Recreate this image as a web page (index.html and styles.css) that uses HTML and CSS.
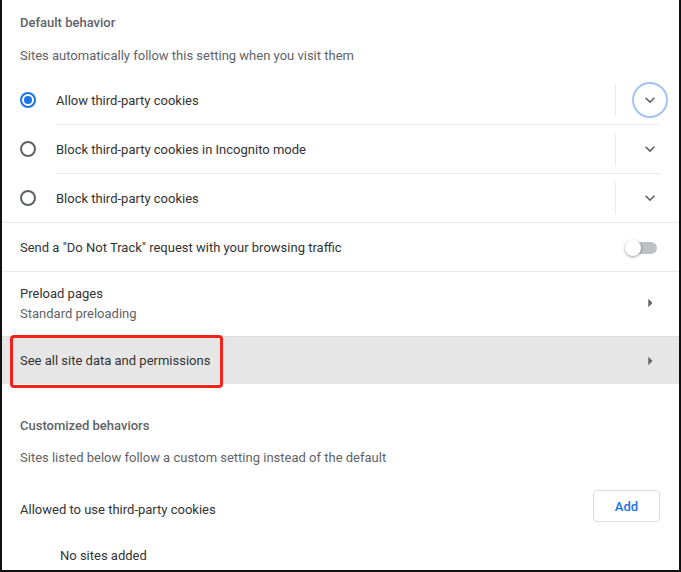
FILE: index.html
```html
<!DOCTYPE html>
<html lang="en">
<head>
<meta charset="utf-8">
<title>Cookies settings</title>
<link rel="stylesheet" href="styles.css">
</head>
<body>
<div class="frame">
  <div class="section-title">Default behavior</div>
  <div class="section-sub">Sites automatically follow this setting when you visit them</div>

  <div class="radio-group">
    <div class="radio-row">
      <span class="radio checked"></span>
      <div class="radio-body">
        <span class="label">Allow third-party cookies</span>
        <span class="vdivider"></span>
        <span class="icon-btn focused">
          <svg viewBox="0 0 24 24" width="20" height="20"><path d="M7.41 8.59L12 13.17l4.59-4.58L18 10l-6 6-6-6 1.41-1.41z" fill="#5f6368"/></svg>
        </span>
      </div>
    </div>
    <div class="radio-row">
      <span class="radio"></span>
      <div class="radio-body">
        <span class="label">Block third-party cookies in Incognito mode</span>
        <span class="vdivider"></span>
        <span class="icon-btn">
          <svg viewBox="0 0 24 24" width="20" height="20"><path d="M7.41 8.59L12 13.17l4.59-4.58L18 10l-6 6-6-6 1.41-1.41z" fill="#5f6368"/></svg>
        </span>
      </div>
    </div>
    <div class="radio-row">
      <span class="radio"></span>
      <div class="radio-body">
        <span class="label">Block third-party cookies</span>
        <span class="vdivider"></span>
        <span class="icon-btn">
          <svg viewBox="0 0 24 24" width="20" height="20"><path d="M7.41 8.59L12 13.17l4.59-4.58L18 10l-6 6-6-6 1.41-1.41z" fill="#5f6368"/></svg>
        </span>
      </div>
    </div>
  </div>

  <div class="row toggle-row">
    <span class="label">Send a "Do Not Track" request with your browsing traffic</span>
    <span class="toggle"><span class="toggle-bar"></span><span class="toggle-knob"></span></span>
  </div>

  <div class="row two-line">
    <div class="text-col">
      <div class="title">Preload pages</div>
      <div class="secondary">Standard preloading</div>
    </div>
    <span class="icon-btn">
      <svg viewBox="0 0 24 24" width="20" height="20"><path d="M10 17l5-5-5-5v10z" fill="#5f6368"/></svg>
    </span>
  </div>

  <div class="row link-row">
    <span class="label">See all site data and permissions</span>
    <span class="icon-btn">
      <svg viewBox="0 0 24 24" width="20" height="20"><path d="M10 17l5-5-5-5v10z" fill="#5f6368"/></svg>
    </span>
    <span class="annot"></span>
  </div>

  <div class="section-title custom">Customized behaviors</div>
  <div class="section-sub custom-sub">Sites listed below follow a custom setting instead of the default</div>

  <div class="list-header">
    <span class="label">Allowed to use third-party cookies</span>
    <span class="add-btn">Add</span>
  </div>
  <div class="empty">No sites added</div>
</div>
</body>
</html>
```

FILE: styles.css
```css
* { box-sizing: border-box; }
html, body {
  margin: 0;
  padding: 0;
  background: #fff;
}
body {
  font-family: Roboto, "Liberation Sans", Arial, sans-serif;
  font-size: 13px;
  color: #333;
}
.frame {
  width: 681px;
  height: 572px;
  overflow: hidden;
  border-left: 2px solid #111;
  border-right: 2px solid #111;
  border-bottom: 2px solid #111;
  background: #fff;
}
.label, .title {
  color: #333;
  line-height: 20px;
}
.secondary {
  color: #5f6368;
  line-height: 20px;
}
.section-title {
  padding: 13px 19px 0 18px;
  line-height: 20px;
  font-weight: 500;
  color: #5f6368;
}
.section-sub {
  margin-top: 13px;
  padding: 0 19px 0 18px;
  line-height: 20px;
  color: #5f6368;
}
.radio-group {
  margin-top: 10px;
}
.radio-row {
  display: flex;
  align-items: stretch;
  padding-left: 18px;
}
.radio {
  align-self: center;
  width: 16px;
  height: 16px;
  border-radius: 50%;
  border: 2px solid #5f6368;
  margin-right: 20px;
  flex: none;
  position: relative;
}
.radio.checked {
  border-color: #1a73e8;
}
.radio.checked::after {
  content: "";
  position: absolute;
  left: 2px;
  top: 2px;
  width: 8px;
  height: 8px;
  border-radius: 50%;
  background: #1a73e8;
}
.radio-body {
  flex: 1;
  display: flex;
  align-items: center;
  height: 48px;
  margin-right: 19px;
}
.radio-row + .radio-row .radio-body {
  height: 49px;
  border-top: 1px solid #e8eaed;
}
.radio-body .label {
  flex: 1;
  padding-top: 1px;
}
.vdivider {
  width: 1px;
  height: 32px;
  background: #e8eaed;
  margin-right: 16px;
  flex: none;
}
.icon-btn {
  width: 36px;
  height: 36px;
  border-radius: 50%;
  display: flex;
  align-items: center;
  justify-content: center;
  margin-right: -8px;
  flex: none;
  border: 2px solid transparent;
}
.icon-btn.focused {
  border-color: #a3c3f5;
}
.icon-btn svg {
  display: block;
}
.row {
  display: flex;
  align-items: center;
  padding: 0 19px 0 18px;
  border-top: 1px solid #e8eaed;
}
.row .label {
  flex: 1;
  padding-top: 1px;
}
.row .text-col {
  flex: 1;
}
.toggle-row {
  height: 49px;
}
.toggle {
  position: relative;
  width: 35px;
  height: 16px;
  flex: none;
  margin-top: 1px;
}
.toggle-bar {
  position: absolute;
  left: 1px;
  top: 2px;
  width: 31px;
  height: 12px;
  border-radius: 6px;
  background: #bdc1c6;
}
.toggle-knob {
  position: absolute;
  left: 0;
  top: 0;
  width: 16px;
  height: 16px;
  border-radius: 50%;
  background: #fff;
  box-shadow: 0 1px 3px rgba(0, 0, 0, 0.4);
}
.two-line {
  height: 65px;
  align-items: flex-start;
}
.two-line .text-col {
  padding-top: 12px;
}
.two-line .icon-btn {
  margin-top: 13px;
}
.link-row {
  position: relative;
  height: 48px;
  background: #e6e6e6;
  border-top-color: #dedede;
}
.annot {
  position: absolute;
  left: 8px;
  top: -2px;
  width: 213px;
  height: 53px;
  border: 3px solid #f3231b;
  border-radius: 4px;
}
.custom {
  padding-top: 32px;
}
.custom-sub {
  margin-top: 12px;
}
.list-header {
  display: flex;
  align-items: flex-start;
  margin-top: 22px;
  padding: 0 19px 0 18px;
}
.list-header .label {
  flex: 1;
  padding-top: 10px;
}
.add-btn {
  width: 67px;
  height: 32px;
  border: 1px solid #dadce0;
  border-radius: 4px;
  color: #1a73e8;
  font-weight: 500;
  display: flex;
  align-items: center;
  justify-content: center;
  flex: none;
}
.empty {
  margin-top: 24px;
  padding-left: 58px;
  line-height: 20px;
  color: #333;
}
```
